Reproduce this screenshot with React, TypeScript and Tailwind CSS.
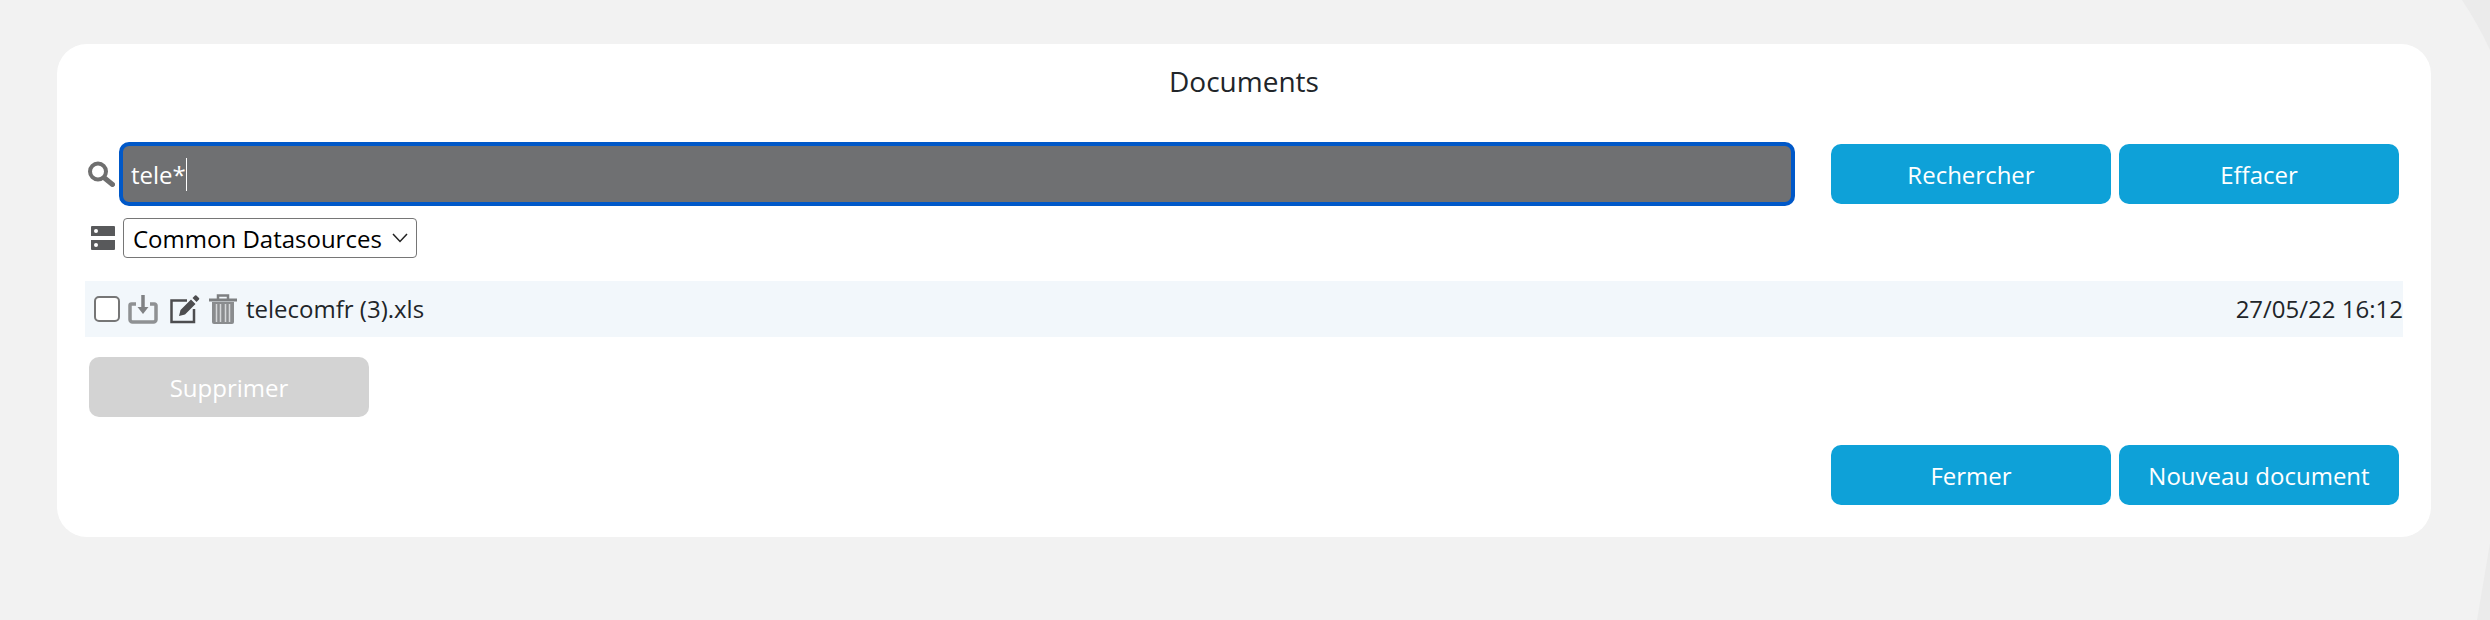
const Btn = ({ label, disabled }: { label: string; disabled?: boolean }) => (
	<button
		className={
			disabled
				? 'w-[280px] h-[60px] pt-[2px] rounded-[10px] bg-[#d3d3d3] text-white text-[24px] font-medium'
				: 'w-[280px] h-[60px] pt-[2px] rounded-[10px] bg-[#0ea1d8] text-white text-[24px] font-medium'
		}
	>
		{label}
	</button>
);

const SearchIcon = () => (
	<svg width="28" height="26" viewBox="0 0 28 26" fill="none" className="blur-[0.4px]">
		<circle cx="11" cy="10.500" r="8" stroke="#6f6f6f" strokeWidth="4" />
		<path d="M17.500 17l8 6.500" stroke="#6f6f6f" strokeWidth="5" strokeLinecap="round" />
	</svg>
);

const ServerIcon = () => (
	<svg width="24" height="24" viewBox="0 0 24 24" fill="#58595b">
		<path d="M1 0h22a1 1 0 0 1 1 1v9H0V1a1 1 0 0 1 1-1zM0 14h24v9a1 1 0 0 1-1 1H1a1 1 0 0 1-1-1z" />
		<circle cx="5" cy="5" r="2" fill="#fff" />
		<circle cx="5" cy="19" r="2" fill="#fff" />
	</svg>
);

const DownloadIcon = () => (
	<svg width="30" height="30" viewBox="0 0 30 30" fill="none" className="blur-[0.6px]">
		<path d="M8 10H3.500A1.500 1.500 0 0 0 2 11.500v14A2.500 2.500 0 0 0 4.500 28h21a2.500 2.500 0 0 0 2.500-2.500v-14a1.500 1.500 0 0 0-1.500-1.500H22" stroke="#8f9193" strokeWidth="3.500" />
		<path d="M15 1v13" stroke="#808284" strokeWidth="3.500" />
		<path d="M9.500 13h11L15 20z" fill="#808284" />
	</svg>
);

const EditIcon = () => (
	<svg width="30" height="30" viewBox="0 0 30 30" fill="none">
		<path d="M17 6.500H1.500v21.500h22.500V15" stroke="#4d4d4f" strokeWidth="2.500" />
		<path d="M9 22l1.500-6L21 5.500l4.500 4.500L15 20.500zM22.500 4l2.500-2.500a1 1 0 0 1 1.400 0l2.600 2.600a1 1 0 0 1 0 1.400L26.500 8z" fill="#4d4d4f" />
	</svg>
);

const TrashIcon = () => (
	<svg width="28" height="30" viewBox="0 0 28 30" fill="none" className="blur-[0.4px]">
		<path d="M0 6h28" stroke="#7d7f81" strokeWidth="3" />
		<path d="M9 5V1.500h10V5" stroke="#7d7f81" strokeWidth="2.500" />
		<path d="M3 8h22v20a2 2 0 0 1-2 2H5a2 2 0 0 1-2-2z" fill="#8a8c8e" />
		<path d="M7.500 10v18M11.500 10v18M16.500 10v18M20.500 10v18" stroke="#d5d7d9" strokeWidth="1.500" />
	</svg>
);

export default function App() {
	return (
		<div className="relative w-[2490px] h-[620px] bg-[#f2f2f2] pt-[44px] pl-[57px] overflow-hidden font-['Open_Sans',sans-serif]">
			{/* darker backdrop shape peeking out at the right edge */}
			<svg width="40" height="620" viewBox="0 0 40 620" className="absolute right-0 top-0">
				<path d="M12 0Q28 24 40 50V0zM40 543L27 620H40z" fill="#ebebeb" />
			</svg>

			<div className="relative w-[2374px] h-[493px] bg-white rounded-[30px] flex flex-col">
				<h1 className="text-center text-[28px] leading-[40px] text-[#212529] mt-[17px]">Documents</h1>

				<div className="flex items-center mt-[41px] ml-[30px] h-[64px]">
					<SearchIcon />
					<div className="ml-[4px] w-[1676px] h-[64px] rounded-[10px] border-[4px] border-[#0058c8] bg-[#6f7072] flex items-center pl-[8px]">
						<span className="text-white text-[24px] font-medium pt-[2px]">tele*</span>
						<span className="w-px h-[33px] bg-white" />
					</div>
					<div className="flex gap-[8px] ml-[36px]">
						<Btn label="Rechercher" />
						<Btn label="Effacer" />
					</div>
				</div>

				<div className="flex items-center mt-[12px] ml-[34px] h-[40px]">
					<ServerIcon />
					<div className="ml-[8px] w-[294px] h-[40px] rounded-[4px] border border-[#767676] flex items-center justify-between pl-[9px] pr-[8px] text-[24px] text-black">
						<span className="pt-[2px]">Common Datasources</span>
						<svg width="16" height="10" viewBox="0 0 16 10" fill="none">
							<path d="M1 1l7 7.500L15 1" stroke="#222" strokeWidth="1.500" />
						</svg>
					</div>
				</div>

				<div className="flex items-center justify-between mt-[23px] ml-[28px] w-[2318px] h-[56px] bg-[#f2f7fb] text-[#212529] text-[24px]">
					<div className="flex items-center">
						<span className="ml-[9px] w-[26px] h-[26px] rounded-[5px] border-[2px] border-[#767676] bg-white" />
						<span className="ml-[8px] flex"><DownloadIcon /></span>
						<span className="ml-[12px] flex"><EditIcon /></span>
						<span className="ml-[9px] flex"><TrashIcon /></span>
						<span className="ml-[9px]">telecomfr (3).xls</span>
					</div>
					<span>27/05/22 16:12</span>
				</div>

				<div className="mt-[20px] ml-[32px]">
					<Btn label="Supprimer" disabled />
				</div>

				<div className="flex gap-[8px] mt-[28px] ml-[1774px]">
					<Btn label="Fermer" />
					<Btn label="Nouveau document" />
				</div>
			</div>
		</div>
	);
}
